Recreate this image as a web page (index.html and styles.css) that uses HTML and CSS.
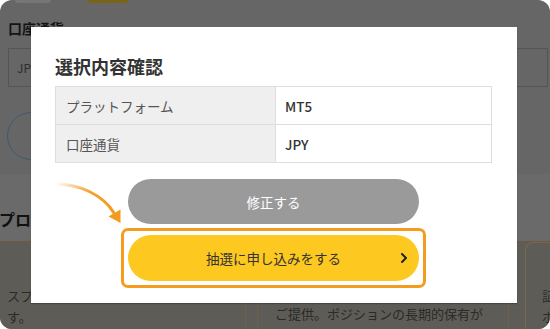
FILE: index.html
```html
<!DOCTYPE html>
<html lang="ja">
<head>
<meta charset="utf-8">
<link rel="stylesheet" href="styles.css">
</head>
<body>
<div class="screen">
  <div class="page">
    <div class="bg-top">
      <span class="pill-gray"></span>
      <span class="pill-yellow"></span>
    </div>
    <div class="bg-label">口座通貨</div>
    <div class="bg-input">JPY</div>
    <div class="bg-round"></div>
    <div class="bg-band"><span class="band-title">プロモーション</span></div>
    <div class="bg-cards">
      <div class="card card-left"><p>スプレッドの縮小をご提供しま</p><p>す。</p></div>
      <div class="card card-mid"><p>スワップポイントの優遇を</p><p>ご提供。ポジションの長期的保有が</p></div>
      <div class="card card-right"><p>証拠金</p><p>ボーナス</p></div>
    </div>
  </div>

  <div class="modal">
    <h2 class="modal-title">選択内容確認</h2>
    <table class="confirm">
      <tr><th>プラットフォーム</th><td>MT5</td></tr>
      <tr><th>口座通貨</th><td>JPY</td></tr>
    </table>
    <div class="actions">
      <button class="btn btn-gray">修正する</button>
      <div class="highlight">
        <button class="btn btn-yellow">抽選に申し込みをする
          <svg class="chev" width="10" height="12" viewBox="0 0 10 12"><path d="M3 2 L7 6 L3 10" fill="none" stroke="#222" stroke-width="2" stroke-linecap="round" stroke-linejoin="round"/></svg>
        </button>
      </div>
    </div>
  </div>

  <svg class="arrow" width="550" height="329" viewBox="0 0 550 329">
    <defs>
      <linearGradient id="ag" gradientUnits="userSpaceOnUse" x1="55" y1="185" x2="112" y2="210">
        <stop offset="0" stop-color="#f49a1e" stop-opacity="0"/>
        <stop offset="0.55" stop-color="#f49a1e" stop-opacity="0.9"/>
        <stop offset="1" stop-color="#f49a1e" stop-opacity="1"/>
      </linearGradient>
    </defs>
    <path d="M55 184 C 80 184, 103 195, 114 213" fill="none" stroke="url(#ag)" stroke-width="3" stroke-linecap="round"/>
    <path d="M120.5 223 L108.5 216.5 L120.5 209.5 Z" fill="#f49a1e"/>
  </svg>
</div>
</body>
</html>
```

FILE: styles.css
```css
* { box-sizing: border-box; }
html, body { margin: 0; padding: 0; background: #fff; }
body { font-family: "Noto Sans CJK JP", "Noto Sans", sans-serif; }

.screen {
  position: relative;
  width: 550px;
  height: 329px;
  border-radius: 12px;
  overflow: hidden;
  background: #666666;
}

.page { display: flex; flex-direction: column; height: 100%; }

.bg-top { display: flex; height: 3px; }
.pill-gray { width: 36px; height: 3px; margin-left: 15px; background: #767676; border-radius: 0 0 10px 10px; }
.pill-yellow { width: 41px; height: 3px; margin-left: 36px; background: #7a6418; border-radius: 0 0 10px 10px; }

.bg-label {
  margin: 17px 0 0 8px;
  font-size: 14px;
  line-height: 16px;
  font-weight: 700;
  color: #141414;
}
.bg-input {
  margin: 12px 0 0 8px;
  width: 540px;
  height: 39px;
  border: 1px solid #555;
  padding: 0 8px;
  line-height: 37px;
  font-size: 12px;
  color: #2c2c2c;
}
.bg-round {
  margin: 25px 0 0 7px;
  width: 300px;
  height: 48px;
  border: 1.5px solid #3e5a70;
  border-radius: 24px;
}
.bg-band {
  margin-top: 14px;
  height: 67px;
  background: #6a6a6a;
  border-bottom: 1px solid #7a6650;
  padding-top: 34px;
}
.band-title {
  display: block;
  margin-left: -1px;
  font-size: 16px;
  line-height: 22px;
  font-weight: 700;
  color: #111;
}
.bg-cards {
  flex: 1;
  display: flex;
  background: #5e5c57;
  font-size: 13px;
  line-height: 21px;
  color: #2a2a2a;
}
.card { flex-shrink: 0; }
.card p { margin: 0; white-space: nowrap; overflow: hidden; }
.card-left { width: 246px; border-right: 1px solid #6f604d; padding: 44px 0 0 7px; }
.card-mid { width: 252px; margin-left: 11px; border-left: 1px solid #6f604d; border-right: 1px solid #6f604d; padding: 41px 0 0 17px; }
.card-right { flex: 1 1 auto; min-width: 0; margin: 1px 0 0 16px; border: 1px solid #7a6650; border-right: 0; border-bottom: 0; border-top-left-radius: 8px; padding: 42px 0 0 16px; }

.modal {
  position: absolute;
  left: 31px;
  top: 27px;
  width: 486px;
  height: 276px;
  background: #fff;
  box-shadow: 0 1px 1px rgba(0,0,0,0.25);
  padding: 26px 25px 16px 24px;
  display: flex;
  flex-direction: column;
}
.modal-title {
  margin: 0 0 7px 0;
  font-size: 18px;
  line-height: 26px;
  font-weight: 700;
  color: #333;
}
.confirm {
  width: 437px;
  border-collapse: collapse;
  font-size: 13.5px;
}
.confirm th, .confirm td {
  border: 1px solid #dedede;
  height: 38px;
  padding: 0 9px;
  text-align: left;
  line-height: 20px;
}
.confirm th {
  width: 220px;
  background: #efefef;
  font-weight: 400;
  color: #555;
  padding-left: 10px;
}
.confirm td { color: #333; font-weight: 500; }

.actions {
  margin-top: 16px;
  display: flex;
  flex-direction: column;
  align-items: center;
  gap: 4px;
}
.btn {
  width: 291px;
  border: 0;
  border-radius: 24px;
  font-family: inherit;
  font-size: 13.5px;
  padding: 0;
  position: relative;
}
.btn-gray { height: 45px; background: #9a9a9a; color: #fff; }
.highlight {
  border: 3px solid #f39c1f;
  border-radius: 7px;
  padding: 4px;
  background: #fff;
}
.btn-yellow { display: block; height: 46px; background: #fdc81f; color: #333; }
.chev { position: absolute; right: 10px; top: 17px; }

.arrow { position: absolute; left: 0; top: 0; pointer-events: none; }
```
